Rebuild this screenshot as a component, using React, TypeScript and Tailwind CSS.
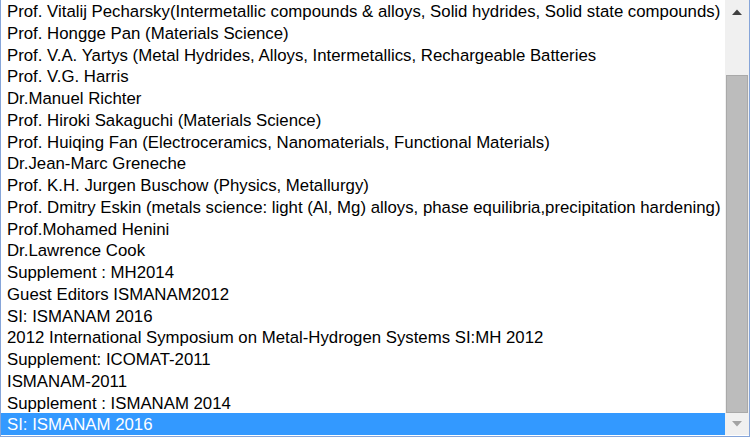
const editors = [
  "Prof. Vitalij Pecharsky(Intermetallic compounds & alloys, Solid hydrides, Solid state compounds)",
  "Prof. Hongge Pan (Materials Science)",
  "Prof. V.A. Yartys (Metal Hydrides, Alloys, Intermetallics, Rechargeable Batteries",
  "Prof. V.G. Harris",
  "Dr.Manuel Richter",
  "Prof. Hiroki Sakaguchi (Materials Science)",
  "Prof. Huiqing Fan (Electroceramics, Nanomaterials, Functional Materials)",
  "Dr.Jean-Marc Greneche",
  "Prof. K.H. Jurgen Buschow (Physics, Metallurgy)",
  "Prof. Dmitry Eskin (metals science: light (Al, Mg) alloys, phase equilibria,precipitation hardening)",
  "Prof.Mohamed Henini",
  "Dr.Lawrence Cook",
  "Supplement : MH2014",
  "Guest Editors ISMANAM2012",
  "SI: ISMANAM 2016",
  "2012 International Symposium on Metal-Hydrogen Systems SI:MH 2012",
  "Supplement: ICOMAT-2011",
  "ISMANAM-2011",
  "Supplement : ISMANAM 2014",
  "SI: ISMANAM 2016",
];

function Arrow({ up, disabled }: { up?: boolean; disabled?: boolean }) {
  return (
    <svg width="10" height="6" viewBox="0 0 10 6">
      <polygon
        points={up ? "0,6 10,6 5,0.5" : "0,0 10,0 5,5.5"}
        fill={disabled ? "#a3a3a3" : "#404040"}
      />
    </svg>
  );
}

export default function App() {
  const selected = editors.length - 1;

  return (
    <div className="w-[750px] h-[439px] bg-white">
      <div
        className="flex h-[437px] w-full border-l border-r border-b border-[#86a5d9] bg-white"
        style={{ fontFamily: '"Liberation Sans", Arial, sans-serif' }}
      >
        {/* Options */}
        <div className="flex flex-1 flex-col overflow-hidden">
          {editors.map((name, i) => (
            <div
              key={i}
              className={
                i === selected
                  ? "h-[21.75px] shrink-0 whitespace-nowrap bg-[#3399ff] pl-[6px] pt-[1px] text-[16.8px] leading-[21px] text-white"
                  : "h-[21.75px] shrink-0 whitespace-nowrap pl-[6px] pt-[1px] text-[16.8px] leading-[21px] text-black"
              }
            >
              {name}
            </div>
          ))}
        </div>

        {/* Scrollbar */}
        <div className="flex h-[435px] w-[24px] shrink-0 flex-col bg-[#f0f0f0]">
          <div className="flex h-[24px] items-center justify-center">
            <Arrow up />
          </div>
          <div className="mt-[51px] mx-[1px] h-[338px] border border-[#a9a9a9] bg-[#bcbcbc]" />
          <div className="flex flex-1 items-center justify-center">
            <Arrow disabled />
          </div>
        </div>
      </div>
    </div>
  );
}
